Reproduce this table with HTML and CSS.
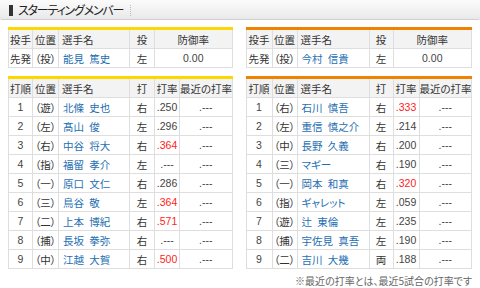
FILE: index.html
```html
<!DOCTYPE html>
<html lang="ja">
<head>
<meta charset="utf-8">
<link rel="stylesheet" href="styles.css">
</head>
<body>
<div class="title-bar"><span class="title-mark"></span><span class="title-text">スターティングメンバー</span><span class="title-sep"></span></div>

<div class="pair pitchers">
  <table class="tbl home">
    <colgroup><col class="c1"><col class="c2"><col class="c3"><col class="c4"><col></colgroup>
    <tr class="head"><th>投手</th><th>位置</th><th class="l">選手名</th><th>投</th><th>防御率</th></tr>
    <tr><td>先発</td><td>（投）</td><td class="name">能見 篤史</td><td>左</td><td class="num">0.00</td></tr>
  </table>
  <table class="tbl away">
    <colgroup><col class="d1"><col class="d2"><col class="d3"><col class="d4"><col></colgroup>
    <tr class="head"><th>投手</th><th>位置</th><th class="l">選手名</th><th>投</th><th>防御率</th></tr>
    <tr><td>先発</td><td>（投）</td><td class="name">今村 信貴</td><td>左</td><td class="num">0.00</td></tr>
  </table>
</div>

<div class="pair batters">
  <table class="tbl home">
    <colgroup><col class="c1"><col class="c2"><col class="c3"><col class="c4"><col class="c5"><col></colgroup>
    <tr class="head"><th>打順</th><th>位置</th><th class="l">選手名</th><th>打</th><th>打率</th><th>最近の打率</th></tr>
    <tr><td class="num">1</td><td>（遊）</td><td class="name">北條 史也</td><td>右</td><td class="num">.250</td><td class="num">.---</td></tr>
    <tr><td class="num">2</td><td>（左）</td><td class="name">髙山 俊</td><td>左</td><td class="num">.296</td><td class="num">.---</td></tr>
    <tr><td class="num">3</td><td>（右）</td><td class="name">中谷 将大</td><td>右</td><td class="num hot">.364</td><td class="num">.---</td></tr>
    <tr><td class="num">4</td><td>（指）</td><td class="name">福留 孝介</td><td>左</td><td class="num">.---</td><td class="num">.---</td></tr>
    <tr><td class="num">5</td><td>（一）</td><td class="name">原口 文仁</td><td>右</td><td class="num">.286</td><td class="num">.---</td></tr>
    <tr><td class="num">6</td><td>（三）</td><td class="name">鳥谷 敬</td><td>左</td><td class="num hot">.364</td><td class="num">.---</td></tr>
    <tr><td class="num">7</td><td>（二）</td><td class="name">上本 博紀</td><td>右</td><td class="num hot">.571</td><td class="num">.---</td></tr>
    <tr><td class="num">8</td><td>（捕）</td><td class="name">長坂 拳弥</td><td>右</td><td class="num">.---</td><td class="num">.---</td></tr>
    <tr><td class="num">9</td><td>（中）</td><td class="name">江越 大賀</td><td>右</td><td class="num hot">.500</td><td class="num">.---</td></tr>
  </table>
  <table class="tbl away">
    <colgroup><col class="d1"><col class="d2"><col class="d3"><col class="d4"><col class="d5"><col></colgroup>
    <tr class="head"><th>打順</th><th>位置</th><th class="l">選手名</th><th>打</th><th>打率</th><th>最近の打率</th></tr>
    <tr><td class="num">1</td><td>（右）</td><td class="name">石川 慎吾</td><td>右</td><td class="num hot">.333</td><td class="num">.---</td></tr>
    <tr><td class="num">2</td><td>（左）</td><td class="name">重信 慎之介</td><td>左</td><td class="num">.214</td><td class="num">.---</td></tr>
    <tr><td class="num">3</td><td>（中）</td><td class="name">長野 久義</td><td>右</td><td class="num">.200</td><td class="num">.---</td></tr>
    <tr><td class="num">4</td><td>（三）</td><td class="name">マギー</td><td>右</td><td class="num">.190</td><td class="num">.---</td></tr>
    <tr><td class="num">5</td><td>（一）</td><td class="name">岡本 和真</td><td>右</td><td class="num hot">.320</td><td class="num">.---</td></tr>
    <tr><td class="num">6</td><td>（指）</td><td class="name">ギャレット</td><td>左</td><td class="num">.059</td><td class="num">.---</td></tr>
    <tr><td class="num">7</td><td>（遊）</td><td class="name">辻 東倫</td><td>左</td><td class="num">.235</td><td class="num">.---</td></tr>
    <tr><td class="num">8</td><td>（捕）</td><td class="name">宇佐見 真吾</td><td>左</td><td class="num">.190</td><td class="num">.---</td></tr>
    <tr><td class="num">9</td><td>（二）</td><td class="name">吉川 大幾</td><td>両</td><td class="num">.188</td><td class="num">.---</td></tr>
  </table>
</div>

<p class="note">※最近の打率とは、最近5試合の打率です</p>
</body>
</html>
```
FILE: styles.css
```css
html, body {
  margin: 0;
  padding: 0;
  background: #fff;
}
body {
  width: 480px;
  height: 288px;
  overflow: hidden;
  font-family: "Noto Sans CJK JP", "Noto Sans", sans-serif;
  font-feature-settings: "palt";
  color: #333;
}
.title-bar {
  height: 19px;
  display: flex;
  align-items: center;
  background: linear-gradient(#fbfbfb, #e9e9e9);
  border-bottom: 1px solid #cfcfcf;
  border-radius: 0 0 2px 2px;
}
.title-mark {
  width: 4px;
  height: 11px;
  background: #333;
  margin-left: 9px;
  margin-right: 5px;
  margin-top: 2px;
}
.title-text {
  font-size: 12px;
  letter-spacing: -1.2px;
  color: #222;
  line-height: 1;
}
.title-sep {
  width: 0;
  height: 11px;
  border-left: 1px dotted #bbb;
  margin-left: 7px;
  margin-top: 2px;
}
.pair {
  display: flex;
  gap: 13px;
  padding: 0 8px;
}
.pitchers { margin-top: 7px; }
.batters { margin-top: 8px; }
.tbl {
  border-collapse: collapse;
  table-layout: fixed;
  font-size: 10.5px;
}
.tbl.home { width: 225px; border-top: 3px solid #fcd700; }
.tbl.away { width: 227px; border-top: 3px solid #ef8200; }
.c1 { width: 24px; }
.c2 { width: 26px; }
.c3 { width: 71px; }
.c4 { width: 25px; }
.c5 { width: 25px; }
.d1 { width: 26px; }
.d2 { width: 25px; }
.d3 { width: 72px; }
.d4 { width: 24px; }
.d5 { width: 26px; }
.tbl th, .tbl td {
  border: 1px solid #dedede;
  height: 18px;
  padding: 0;
  text-align: center;
  white-space: nowrap;
  overflow: hidden;
  line-height: 17px;
  font-weight: normal;
}
.tbl th {
  background: #f3f3f3;
  color: #333;
}
.tbl td { background: #fff; }
.tbl .l { text-align: left; padding-left: 3px; }
.tbl td.name {
  text-align: left;
  padding-left: 4px;
  color: #1f6fb2;
  word-spacing: 3px;
}
.tbl td.num {
  font-family: "Liberation Sans", Arial, sans-serif;
  color: #444;
  font-size: 10.5px;
}
.tbl td.num.hot { color: #f22; }
.note {
  margin: 5px 8px 0 0;
  text-align: right;
  font-size: 10px;
  color: #666;
  line-height: 14px;
}
```
